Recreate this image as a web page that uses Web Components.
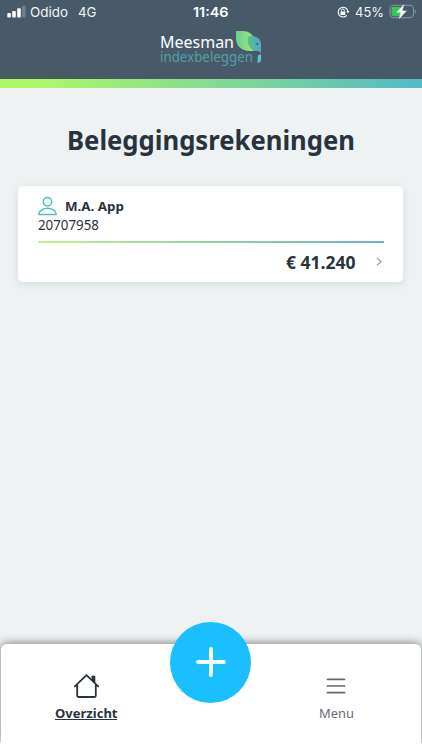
<!DOCTYPE html>
<html lang="nl"><head><meta charset="utf-8"><title>Beleggingsrekeningen</title>
<style>html,body{margin:0;height:100%;overflow:hidden}body{font-family:"Noto Sans","Open Sans",sans-serif;background:#eef2f3;color:#29333e}</style></head>
<body><account-app></account-app>
<script>
const define=(name,html,setup)=>customElements.define(name,class extends HTMLElement{
  connectedCallback(){
    if(this.shadowRoot)return;
    const t=document.createElement('template');t.innerHTML=html;
    this.attachShadow({mode:'open'}).append(t.content.cloneNode(true));
    if(setup)setup(this);
  }
});

/* A single line of text, scaled horizontally to the width given in its "w" attribute. */
define('fit-text',`<style>:host{display:block;flex:none;white-space:nowrap}span{display:inline-block;vertical-align:top;transform-origin:0 50%;white-space:nowrap}</style><span><slot></slot></span>`,
 el=>{const s=el.shadowRoot.querySelector('span'),w=+el.getAttribute('w');el.style.width=w+'px';
  s.style.transform='scaleX('+w/s.getBoundingClientRect().width+')';});

define('status-bar',`<style>
:host{display:grid;grid-template-columns:1fr auto 1fr;height:24px;align-items:center;color:#f1f5f8;font:13px/24px Inter,sans-serif}
.l,.r{display:flex;align-items:center}.l{padding-left:7px}.r{justify-content:flex-end;padding-right:5.5px}svg{display:block;flex:none}
fit-text.t{font-weight:600;color:#fff}
</style>
<div class="l"><svg width="20" height="14" viewBox="0 0 20 14"><g fill="#fff"><rect x=".3" y="8" width="3.6" height="4.6" rx="1"/><rect x="5.2" y="6" width="3.6" height="6.6" rx="1"/><rect x="10.2" y="3.2" width="3.6" height="9.4" rx="1"/></g><rect x="15" y=".8" width="3.6" height="11.8" rx="1" fill="#72808c"/></svg>
<fit-text w="38" style="margin-left:3.4px">Odido</fit-text><fit-text w="18.5" style="margin-left:10px">4G</fit-text></div>
<fit-text class="t" w="35.5">11:46</fit-text>
<div class="r"><svg width="13" height="14" viewBox="0 0 13 14" fill="none" stroke="#fff"><path d="M9.8 10.4A4.9 4.9 0 1 1 10.9 6" stroke-width="1.15"/><path d="M9.2 6.1h3.3l-1.6 2.4z" fill="#fff" stroke="none"/><rect x="3.5" y="6.4" width="4.8" height="3.6" rx=".6" fill="#fff" stroke="none"/><path d="M4.5 6.5V5.4a1.4 1.4 0 0 1 2.8 0v1.1"/></svg>
<fit-text w="29" style="margin:0 5px 0 5px">45%</fit-text>
<svg width="28" height="16" viewBox="0 0 28 16"><rect x="1" y="1.2" width="23.5" height="12.6" rx="3.8" fill="none" stroke="#8996a0" stroke-width="1.1"/><path d="M26 5.7c1.6.5 1.6 3.2 0 3.8z" fill="#8996a0"/><rect x="2.5" y="2.7" width="9.5" height="9.6" rx="2.2" fill="#35c759"/><path d="M14.8.8 7.8 8.2h4.1l-1.6 6.2 7-7.5h-4.2z" fill="#fff" stroke="#fff" stroke-width=".5"/></svg></div>`);

define('brand-logo',`<style>
:host{display:flex;width:104px;height:36px;margin:2px 0 0 160px;position:relative}
.w{display:flex;flex-direction:column}fit-text.m{font-size:16.5px;line-height:17px;margin-top:7px;color:#fff}
fit-text.i{font:400 13.6px/14px "Noto Sans","Open Sans",sans-serif;color:#50a0ac}
svg{position:absolute;left:75px;top:4px}
</style><div class="w"><fit-text class="m" w="74">Meesman</fit-text><fit-text class="i" w="93">indexbeleggen</fit-text></div>
<svg width="28" height="34" viewBox="0 0 28 34"><defs><linearGradient id="g"><stop stop-color="#68ce91"/><stop offset="1" stop-color="#a2ea75"/></linearGradient></defs>
<path d="M1 1h7c6.5 0 11.3 4.5 11.3 10.5V21H15C5.8 21 1 15.5 1 8z" fill="url(#g)"/>
<path d="M13 7.2c3-1.9 7-1.5 10 .8 2 1.6 3 3.7 3 6v9.2c-.8-1.6-2-2.2-4-2.2h-3c-4.5-3-7-8-6-13.8z" fill="#53adbc"/>
<path d="M13 7.2c1.8-1.3 3.6-1.4 5-1.1 1 1.6 1.3 3.4 1.3 5.4V21c-4.8-3.2-7.3-8-6.3-13.8z" fill="#55bd91"/><circle cx="22.3" cy="14" r="1" fill="#3c5365"/>
<path d="M23 25.4c.7-.8 1.8-1 3-1V29c0 2.2-1 3.6-3.5 3.7z" fill="#62c6cb"/></svg>`);

define('app-header',`<style>:host{display:block;height:88px;background:#485a68}.s{height:17px}.g{height:9px;background:linear-gradient(100deg,#aef964 8%,#55bac5 98%)}</style>
<status-bar></status-bar><brand-logo></brand-logo><div class="s"></div><div class="g"></div>`);

define('account-card',`<style>
:host{display:block;box-sizing:border-box;width:385px;height:96px;margin:0 auto 0 18.4px;background:#fff;border-radius:5px;box-shadow:0 2px 7px #29415820;padding:9px 19.5px}
.n{display:flex;height:21px;align-items:center}.n svg{margin-right:8.3px}svg{display:block;flex:none}
.b{font-weight:700;font-size:13.2px;line-height:20px}.id{font-size:13.6px;line-height:18px;margin-left:.3px}
.line{height:2px;margin-top:6.5px;background:linear-gradient(90deg,#c2f285,#8cd4a6 50%,#65b6c3)}
.a{display:flex;justify-content:flex-end;align-items:center;height:38px}.v{font-size:17.6px;font-weight:700;margin-right:20px}.a svg{margin-right:2px}
</style><div class="n"><svg width="19" height="20" viewBox="0 0 19 20" fill="none" stroke="#54bbbd" stroke-width="1.5"><circle cx="9.5" cy="5.8" r="4.2"/><path d="M1.3 18.6c-.4 0-.6-.3-.5-.7.5-3.3 4.2-5.6 8.7-5.6s8.2 2.3 8.7 5.6c.1.4-.1.7-.5.7z"/></svg><fit-text class="b" w="59"><slot name="name"></slot></fit-text></div>
<fit-text class="id" w="61"><slot name="number"></slot></fit-text><div class="line"></div>
<div class="a"><fit-text class="v" w="69.5"><slot name="value"></slot></fit-text><svg width="6" height="9" viewBox="0 0 6 9"><path d="m1 .8 4 3.8-4 3.7" fill="none" stroke="#93979d" stroke-width="1.1"/></svg></div>`);

define('nav-item',`<style>:host{display:flex;flex-direction:column;align-items:center;width:90px;padding-top:28px}.i{height:28px;display:flex;align-items:center}</style><div class="i"><slot name="icon"></slot></div><slot></slot>`);

define('bottom-nav',`<style>
:host{display:flex;box-sizing:border-box;justify-content:space-between;position:relative;height:99px;margin:0 1px;padding:0 40px;background:#fff;border-radius:6px 6px 0 0;box-shadow:0 -1px 10px #0007}
nav-item{color:#6a6b74;font-size:13px;line-height:26px}.on{color:#29333e;font-weight:700}.on fit-text{border-bottom:1px solid #29333e;height:19px}
button{position:absolute;left:169.4px;top:-22.5px;width:81px;height:81px;padding:0;border:0;border-radius:50%;background:#19bfff;display:grid;place-items:center}svg{display:block}
</style><nav-item class="on"><svg slot="icon" width="27" height="26" viewBox="0 0 27 26" fill="none" stroke="#29333e" stroke-width="1.8" stroke-linecap="round" stroke-linejoin="round"><path d="M1.8 13.3 13.5 2.2l11.7 11.1M4.2 12v10.2q0 1.8 1.8 1.8h15q1.8 0 1.8-1.8V12"/><path d="M19 3h3v7l-3-3z" fill="#29333e" stroke-width=".6"/></svg><fit-text w="62.5">Overzicht</fit-text></nav-item>
<button aria-label="Toevoegen"><svg width="32" height="32" viewBox="0 0 32 32"><path d="M16 3v26M3 16h26" stroke="#fff" stroke-width="3.8" stroke-linecap="round"/></svg></button>
<nav-item><svg slot="icon" width="20" height="18" viewBox="0 0 20 18"><path d="M1.5 2.3h17M1.5 9h17M1.5 15.7h17" stroke="#64656e" stroke-width="1.7" stroke-linecap="round"/></svg><fit-text w="35">Menu</fit-text></nav-item>`);

define('account-app',`<style>:host{display:flex;flex-direction:column;height:750px;width:422px;overflow:hidden;background:#eef2f3}
main{flex:1;min-height:0}h1{display:flex;margin:32px 0 26px 66.5px;font-size:26.3px;line-height:40px;font-weight:700}
footer{position:relative;height:7px;background:#fff}</style>
<app-header></app-header><main><h1><fit-text w="288">Beleggingsrekeningen</fit-text></h1>
<account-card><span slot="name">M.A. App</span><span slot="number">20707958</span><span slot="value">€ 41.240</span></account-card></main><bottom-nav></bottom-nav><footer></footer>`);
</script></body></html>
